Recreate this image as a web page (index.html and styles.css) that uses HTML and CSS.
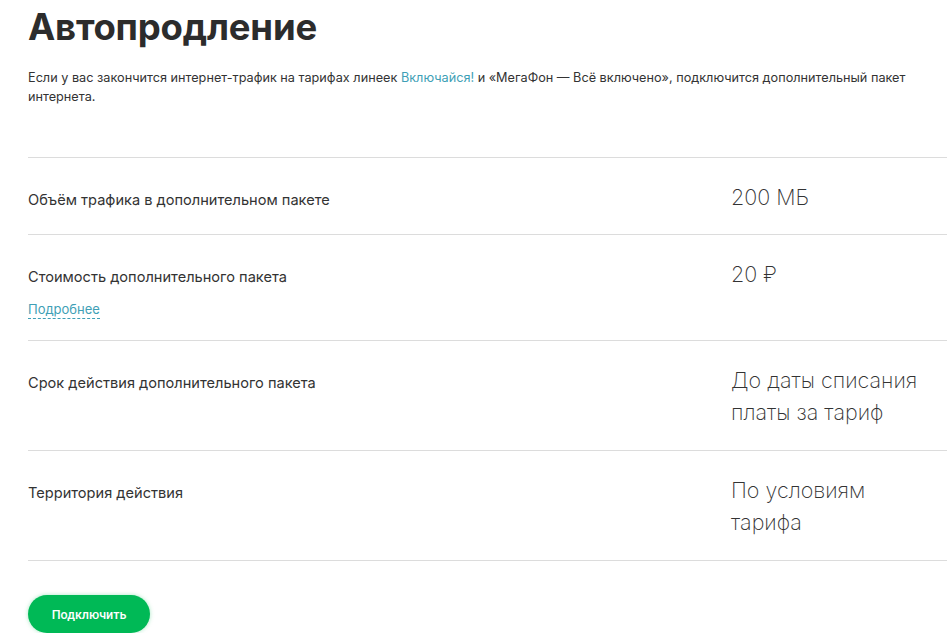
FILE: index.html
```html
<!DOCTYPE html>
<html lang="ru">
<head>
<meta charset="utf-8">
<title>Автопродление</title>
<link rel="stylesheet" href="styles.css">
</head>
<body>
<main class="page">
  <h1 class="title">Автопродление</h1>
  <p class="desc">Если у вас закончится интернет-трафик на тарифах линеек <a class="link" href="#">Включайся!</a> и «МегаФон — Всё включено», подключится дополнительный пакет<br>интернета.</p>
  <div class="table">
    <div class="row">
      <div class="label-col"><div class="label">Объём трафика в дополнительном пакете</div></div>
      <div class="value">200 МБ</div>
    </div>
    <div class="row">
      <div class="label-col">
        <div class="label">Стоимость дополнительного пакета</div>
        <a class="more" href="#">Подробнее</a>
      </div>
      <div class="value">20 ₽</div>
    </div>
    <div class="row row-tall">
      <div class="label-col"><div class="label">Срок действия дополнительного пакета</div></div>
      <div class="value">До даты списания платы за тариф</div>
    </div>
    <div class="row row-tall">
      <div class="label-col"><div class="label">Территория действия</div></div>
      <div class="value">По условиям тарифа</div>
    </div>
  </div>
  <button class="btn" type="button">Подключить</button>
</main>
</body>
</html>
```

FILE: styles.css
```css
* { box-sizing: border-box; }
html, body { margin: 0; background: #fff; }
body {
  font-family: Inter, "Noto Sans", sans-serif;
  color: #333;
}
.page {
  padding: 0 3px 0 28px;
}
.title {
  margin: 0;
  padding-top: 4px;
  font-size: 36.5px;
  line-height: 46px;
  font-weight: 700;
  color: #2c2c2c;
  letter-spacing: -0.2px;
}
.desc {
  margin: 18px 0 0;
  font-size: 12.7px;
  line-height: 19px;
  color: #333;
  max-width: 890px;
}
.link {
  color: #3f9fb6;
  text-decoration: none;
}
.table {
  margin-top: 51px;
  border-top: 1px solid #dcdcdc;
}
.row {
  display: grid;
  grid-template-columns: 1fr 200px;
  align-items: baseline;
  padding: 23px 16px 21px 0;
  border-bottom: 1px solid #dcdcdc;
}
.row-tall {
  padding-bottom: 22px;
}
.label-col {
  display: flex;
  flex-direction: column;
  align-items: flex-start;
  gap: 14px;
}
.label {
  font-size: 14.6px;
  line-height: 20px;
  color: #333;
}
.more {
  font-size: 13px;
  color: #3f9fb6;
  text-decoration: none;
  border-bottom: 1px dashed #3f9fb6;
  line-height: 17px;
}
.value {
  font-size: 21.5px;
  line-height: 32px;
  font-weight: 200;
  color: #333;
}
.btn {
  margin-top: 34px;
  width: 122px;
  height: 38px;
  border: 0;
  border-radius: 19px;
  background: #00b956;
  color: #fff;
  font-family: Roboto, Inter, sans-serif;
  font-size: 12.5px;
  font-weight: 500;
  box-shadow: 0 0 4px rgba(0, 185, 86, 0.35);
  cursor: pointer;
}
```
